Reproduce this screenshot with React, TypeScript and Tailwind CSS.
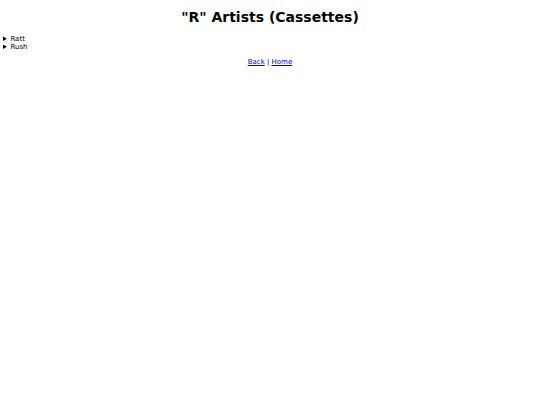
export default function App() {
  const artists = ['Ratt', 'Rush'];

  return (
    <div className="min-h-[405px] bg-white text-black text-[7px] font-['DejaVu_Sans',sans-serif]">
      <h1 className="pt-[9px] pb-[10px] text-center text-[14px] font-bold leading-[16px]">"R" Artists (Cassettes)</h1>
      <div className="px-[3px]">
        {artists.map((name) => (
          <details key={name}>
            <summary className="leading-[8px] cursor-pointer">{name}</summary>
          </details>
        ))}
      </div>
      <p className="mt-[7px] text-center leading-[8px]">
        <a href="#" className="text-[#0000ee] underline">Back</a> | <a href="#" className="text-[#0000ee] underline">Home</a>
      </p>
    </div>
  );
}
